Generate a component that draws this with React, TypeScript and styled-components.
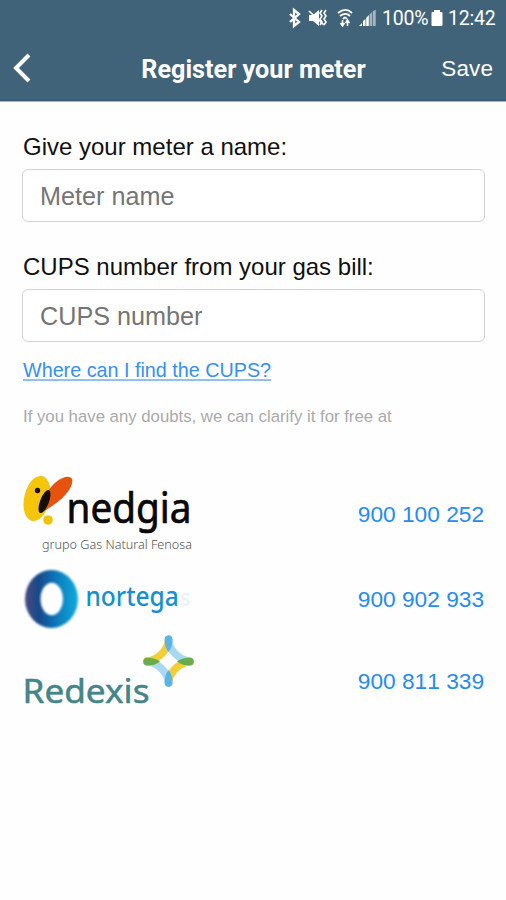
import React from 'react';
import styled, { createGlobalStyle } from 'styled-components';

const GlobalStyle = createGlobalStyle`
  * { box-sizing: border-box; }
  body { margin: 0; background: #fefefe; }
`;

const Screen = styled.div`
  width: 506px;
  height: 900px;
  overflow: hidden;
  background: #fefefe;
  color: #111;
  font-family: "Liberation Sans", Arial, sans-serif;
`;

const Header = styled.header`
  height: 101px;
  background: #416379;
  border-bottom: 1px solid #385b75;
  box-shadow: 0 1px 0 #a9b5be;
  color: #fff;
`;

const StatusBar = styled.div`
  height: 36px;
  padding: 1px 11px 0 0;
  display: flex;
  align-items: center;
  justify-content: flex-end;
  font: 400 19.5px/36px Roboto, sans-serif;
`;

const StatusIcons = styled.svg`
  width: 92px;
  height: 36px;
  margin: -1px 6px 0 0;
`;

const Battery = styled.svg`
  width: 12px;
  height: 36px;
  margin: -1px 5px 0 3px;
`;

const StatusText = styled.span<{ $width: number }>`
  width: ${(p) => p.$width}px;
  white-space: nowrap;
  letter-spacing: -0.2px;
`;

const NavBar = styled.div`
  height: 64px;
  padding: 0 13px 0 12px;
  display: grid;
  grid-template-columns: 100px 1fr 100px;
  align-items: center;
`;

const BackButton = styled.button`
  display: flex;
  padding: 0;
  border: 0;
  background: none;
  color: inherit;
`;

const Title = styled.h1`
  margin: 4px 0 0 2px;
  text-align: center;
  white-space: nowrap;
  font: 700 25.2px/30px Roboto, sans-serif;
`;

const SaveButton = styled.button`
  margin-top: 2px;
  padding: 0;
  border: 0;
  background: none;
  color: inherit;
  text-align: right;
  font: 400 22.5px/28px "Liberation Sans", Arial, sans-serif;
  letter-spacing: 0.1px;
`;

const Content = styled.main`
  padding: 31px 21px 0 22px;
`;

const Field = styled.label<{ $height: number }>`
  display: block;
  height: ${(p) => p.$height}px;
`;

const FieldLabel = styled.span`
  display: block;
  height: 37px;
  padding-left: 1px;
  font-size: 24px;
  line-height: 30px;
`;

const Input = styled.input`
  display: block;
  width: 100%;
  height: 53px;
  padding: 2px 17px 0;
  border: 1.5px solid #d2d2d2;
  border-radius: 6px;
  background: #fff;
  outline: none;
  font: 400 25.2px/30px "Liberation Sans", Arial, sans-serif;
  &::placeholder { color: #757575; opacity: 1; }
`;

const HelpLink = styled.a`
  display: block;
  width: max-content;
  margin-left: 1px;
  color: #3490f2;
  font-size: 19.75px;
  line-height: 24px;
  text-decoration: underline;
  text-decoration-color: #8fc0f6;
  text-decoration-thickness: 2px;
  text-underline-offset: 2px;
  text-decoration-skip-ink: none;
`;

const Note = styled.p`
  margin: 25px 0 0 1px;
  color: #aaa;
  font-size: 16.75px;
  line-height: 20px;
  white-space: nowrap;
`;

const CompanyList = styled.ul`
  margin: 43px 0 0;
  padding: 0;
  list-style: none;
`;

const Company = styled.li<{ $height: number }>`
  height: ${(p) => p.$height}px;
  display: flex;
  justify-content: space-between;
`;

const Phone = styled.a<{ $top: number }>`
  margin: ${(p) => p.$top}px 1px 0 0;
  color: #268bee;
  font-size: 22.7px;
  line-height: 28px;
  font-kerning: none;
  text-decoration: none;
`;

const Logo = styled.svg`
  display: block;
  flex: none;
  overflow: visible;
`;

function SystemIcons() {
  return (
    <StatusIcons viewBox="0 0 92 36" fill="none" stroke="#fff">
      <path d="m6 14 9 8-5 4V10l5 4-9 8" strokeWidth="2.3" />
      <path d="M25 15h4l6-5v16l-6-5h-4Z" fill="#fff" stroke="none" />
      <path d="m25 11 15 14" strokeWidth="1.7" />
      <path d="m38 10-2 3 2 3-2 3 2 3-2 3m6-15-2 3 2 3-2 3 2 3-2 3" strokeWidth="1.6" />
      <path d="M54 13c5-4 10-4 14 0m-12 3c4-3 7-3 10 0m-7 3c2-2 2-2 4 0" strokeWidth="1.8" />
      <path d="M58.5 20v5m-2-2 2 3 2-3m3 3v-5m-2 2 2-3 2 3" strokeWidth="1.5" />
      <path d="M75 26h3v-3Zm4 0h2.5v-7L79 21Z" fill="#fff" stroke="none" />
      <path d="M82.2 26h2.6V15l-2.6 3Z" fill="#fff" stroke="none" />
      <path d="M85.5 26h2.5V12l-2.5 2.5Zm3.2 0h3V9.5l-3 2Z" fill="#a5b5c0" stroke="none" />
    </StatusIcons>
  );
}

function NedgiaLogo() {
  return (
    <Logo width="172" height="82" viewBox="0 -5 172 82">
      <ellipse cx="15" cy="23.5" rx="12.8" ry="23" transform="rotate(13 15 23.5)" fill="#f5c50b" />
      <path d="M20 35c-1-11 6-21 14-28 7-6 16-7.500 16.300-1.500C50.500 14 40 26 22 36Z" fill="#e65210" />
      <ellipse cx="22.5" cy="26.500" rx="4.400" ry="12.300" transform="rotate(21 22.5 26.500)" fill="#150e08" />
      <circle cx="15.5" cy="15.5" r="2.7" fill="#17110a" />
      <circle cx="26" cy="45" r="4.800" fill="#f2c20c" />
      <text x="44.5" y="48" textLength="125" lengthAdjust="spacingAndGlyphs" fontFamily="Noto Sans" fontSize="42" fontWeight="400" fill="#080808" stroke="#080808" strokeWidth=".7">nedgia</text>
      <text x="20" y="74" textLength="150" lengthAdjust="spacingAndGlyphs" fontFamily="Noto Sans" fontSize="12.5" fontWeight="300" fill="#555">grupo Gas Natural Fenosa</text>
    </Logo>
  );
}

function NortegasLogo() {
  return (
    <Logo width="172" height="66" viewBox="0 -4 172 66">
      <defs>
        <linearGradient id="nortegasRing">
          <stop offset="0" stopColor="#4a4b82" />
          <stop offset=".25" stopColor="#174789" />
          <stop offset=".6" stopColor="#087abb" />
          <stop offset="1" stopColor="#13acdf" />
        </linearGradient>
        <filter id="ringSoftness" x="-20%" y="-20%" width="140%" height="140%">
          <feGaussianBlur stdDeviation="1.3" />
        </filter>
      </defs>
      <path filter="url(#ringSoftness)" fill="url(#nortegasRing)" fillRule="evenodd" d="M3 33a26.500 29 0 1 1 53 0 26.500 29 0 1 1-53 0Zm15.500 0a11.200 16.200 0 1 0 22.400 0 11.200 16.200 0 1 0-22.400 0Z" />
      <text x="63.5" y="40" textLength="105" lengthAdjust="spacingAndGlyphs" fontFamily="Noto Sans" fontSize="26.5" fontWeight="500" fill="#178fce">
        nortega<tspan dx="1" fontSize="24" fill="#eaf3fa">s</tspan>
      </text>
    </Logo>
  );
}

function RedexisLogo() {
  return (
    <Logo width="175" height="72" viewBox="0 0 175 72">
      <text x="0.5" y="74" textLength="127" lengthAdjust="spacingAndGlyphs" fontFamily="Noto Sans" fontSize="32.5" fontWeight="400" fill="#438589" stroke="#438589" strokeWidth=".5">Redexis</text>
      <g transform="translate(0 -4)">
        <g fill="none" strokeWidth="7.5" strokeLinecap="round">
          <path d="M146.5 15C146 25 136 35 125 36" stroke="#f2cf38" />
          <path d="M146.5 15C147 25 157 35 168 36" stroke="#a9d8f3" />
          <path d="M146.5 58C147 48 157 37 168 37" stroke="#f2cf38" />
          <path d="M146.5 58C146 48 136 37 125 37" stroke="#a9d8f3" />
        </g>
        <g fill="#59b5e8">
          <path d="M142.7 14c0-5 7.8-5 7.8 0 0 5-1 9-4 13-3-4-4-8-3.8-13Z" />
          <path d="M142.7 58c0 5 7.8 5 7.8 0 0-5-1-9-4-13-3 4-4 8-3.8 13Z" />
        </g>
        <g fill="#68ad49">
          <path d="M125 32.7c-5 0-5 7.7 0 7.7 5 0 9-1 13-4-4-3-8-4-13-3.7Z" />
          <path d="M168 32.7c5 0 5 7.7 0 7.7-5 0-9-1-13-4 4-3 8-4 13-3.7Z" />
        </g>
      </g>
    </Logo>
  );
}

const companies = [
  { phone: '900 100 252', height: 92, top: 30, Mark: NedgiaLogo },
  { phone: '900 902 933', height: 67, top: 23, Mark: NortegasLogo },
  { phone: '900 811 339', height: 80, top: 38, Mark: RedexisLogo },
];

export default function App() {
  return (
    <Screen>
      <GlobalStyle />
      <Header>
        <StatusBar>
          <SystemIcons />
          <StatusText $width={46}>100%</StatusText>
          <Battery viewBox="0 0 12 36">
            <path d="M3 10h6v2h1.5q1 0 1 1v12q0 1-1 1h-9q-1 0-1-1V13q0-1 1-1H3Z" fill="#fff" />
          </Battery>
          <StatusText $width={47}>12:42</StatusText>
        </StatusBar>
        <NavBar>
          <BackButton aria-label="Back">
            <svg width="20" height="30" viewBox="0 0 20 30" fill="none" stroke="#fff" strokeWidth="4">
              <path d="M17 2 4 15 17 28" />
            </svg>
          </BackButton>
          <Title>Register your meter</Title>
          <SaveButton>Save</SaveButton>
        </NavBar>
      </Header>
      <Content>
        <Field $height={120}>
          <FieldLabel>Give your meter a name:</FieldLabel>
          <Input placeholder="Meter name" />
        </Field>
        <Field $height={106}>
          <FieldLabel>CUPS number from your gas bill:</FieldLabel>
          <Input placeholder="CUPS number" />
        </Field>
        <HelpLink href="#">Where can I find the CUPS?</HelpLink>
        <Note>If you have any doubts, we can clarify it for free at</Note>
        <CompanyList>
          {companies.map(({ phone, height, top, Mark }) => (
            <Company key={phone} $height={height}>
              <Mark />
              <Phone $top={top} href={`tel:${phone.replace(/ /g, '')}`}>{phone}</Phone>
            </Company>
          ))}
        </CompanyList>
      </Content>
    </Screen>
  );
}
